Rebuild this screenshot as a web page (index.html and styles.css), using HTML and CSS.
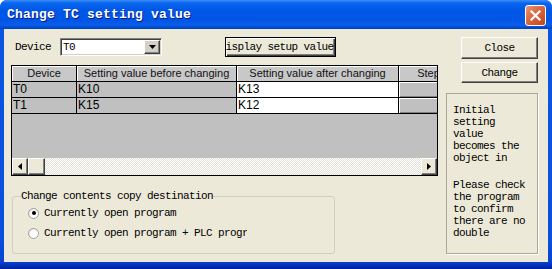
FILE: index.html
```html
<!DOCTYPE html>
<html lang="en">
<head>
  <meta charset="UTF-8" />
  <meta name="viewport" content="width=device-width, initial-scale=1.0"/>
  <title>Change TC setting value</title>
  <link rel="stylesheet" href="styles.css">
</head>
<body>
  <div class="window">
    <div class="titlebar">
      <span class="title">Change TC setting value</span>
      <span class="close-x">
        <svg width="13" height="13" viewBox="0 0 13 13"><path d="M2.5 2.5L10.5 10.5M10.5 2.5L2.5 10.5" stroke="#fff" stroke-width="2.2" stroke-linecap="square"/></svg>
      </span>
    </div>

    <div class="frame">
      <div class="left">
        <div class="toprow">
          <span class="label">Device</span>
          <div class="combo">
            <span class="combo-text">T0</span>
            <span class="combo-btn">
              <svg width="7" height="4" viewBox="0 0 7 4"><path d="M0 0H7L3.5 4Z" fill="#000"/></svg>
            </span>
          </div>
          <button class="btn btn-default"><span class="btn-label">Display setup value</span></button>
        </div>

        <div class="grid">
          <div class="grid-body">
            <div class="row head">
              <div class="cell">Device</div>
              <div class="cell">Setting value before changing</div>
              <div class="cell">Setting value after changing</div>
              <div class="cell">Step</div>
            </div>
            <div class="row">
              <div class="cell data">T0</div>
              <div class="cell data">K10</div>
              <div class="cell data edit">K13</div>
              <div class="cell data raised"></div>
            </div>
            <div class="row">
              <div class="cell data">T1</div>
              <div class="cell data">K15</div>
              <div class="cell data edit">K12</div>
              <div class="cell data raised"></div>
            </div>
          </div>
          <div class="hscroll">
            <span class="sb-btn">
              <svg width="4" height="7" viewBox="0 0 4 7"><path d="M4 0V7L0 3.5Z" fill="#000"/></svg>
            </span>
            <span class="sb-thumb"></span>
            <span class="sb-track"></span>
            <span class="sb-btn">
              <svg width="4" height="7" viewBox="0 0 4 7"><path d="M0 0V7L4 3.5Z" fill="#000"/></svg>
            </span>
          </div>
        </div>

        <fieldset class="group">
          <legend>Change contents copy destination</legend>
          <div class="radio-row">
            <span class="radio checked"></span>
            <span>Currently open program</span>
          </div>
          <div class="radio-row">
            <span class="radio"></span>
            <span class="clip">Currently open program + PLC program</span>
          </div>
        </fieldset>
      </div>

      <div class="right">
        <button class="btn side-btn">Close</button>
        <button class="btn side-btn">Change</button>
        <div class="info">
          <div class="info-top">Initial setting value becomes the object in memory. T</div>
          <div class="info-bottom">Please check the program to confirm there are no double</div>
        </div>
      </div>
    </div>
  </div>
</body>
</html>
```

FILE: styles.css
```css
body {
  margin: 0;
  width: 552px;
  height: 269px;
  overflow: hidden;
  background: #fff;
  font-family: "Liberation Mono", "DejaVu Sans Mono", monospace;
  font-size: 11px;
  letter-spacing: -0.6px;
  color: #000;
}

.window {
  width: 552px;
  height: 269px;
  display: flex;
  flex-direction: column;
  background: linear-gradient(to bottom, #0a57e4 0, #0a4fdc 240px, #0842d0 262px, #001ea0 269px);
  border-radius: 7px 7px 0 0;
  overflow: hidden;
}

/* title bar */
.titlebar {
  height: 29px;
  flex: none;
  display: flex;
  align-items: center;
  justify-content: space-between;
  padding: 0 6px 0 7px;
  background: linear-gradient(to bottom, #3d8ff7 0, #0a66f0 3px, #0058e6 10px, #0055e5 20px, #0a5ee8 25px, #0046cf 28px, #0041c8 29px);
}

.title {
  color: #fff;
  font-weight: bold;
  font-size: 13px;
  letter-spacing: 0.2px;
  text-shadow: 1px 1px 0 #0a1883;
  margin-top: -1px;
}

.close-x {
  width: 19px;
  height: 19px;
  display: flex;
  align-items: center;
  justify-content: center;
  border: 1px solid #fff;
  border-radius: 3px;
  background: linear-gradient(135deg, #e9977a 0, #dc6a44 40%, #c4441c 100%);
  margin-top: 1px;
}

/* dialog face */
.frame {
  flex: 1;
  margin: 0 4px 7px 4px;
  background: #ece9d8;
  display: flex;
  padding-top: 8px;
}

.left {
  width: 427px;
  margin-left: 7px;
}

.toprow {
  height: 20px;
  display: flex;
  align-items: center;
}

.label {
  margin-left: 4px;
}

.combo {
  margin-left: 9px;
  width: 102px;
  height: 18px;
  box-sizing: border-box;
  background: #fff;
  border: 1px solid;
  border-color: #808080 #fff #fff #808080;
  box-shadow: inset 1px 1px 0 #404040, inset -1px -1px 0 #d4d0c8;
  display: flex;
  align-items: center;
  padding: 1px;
}

.combo-text {
  flex: 1;
  padding-left: 1px;
}

.combo-btn {
  width: 16px;
  height: 14px;
  box-sizing: border-box;
  background: #d4d0c8;
  border: 1px solid;
  border-color: #fff #404040 #404040 #fff;
  box-shadow: inset -1px -1px 0 #808080;
  display: flex;
  align-items: center;
  justify-content: center;
}

.btn {
  font: inherit;
  letter-spacing: inherit;
  color: #000;
  background: #ece9d8;
  box-sizing: border-box;
  padding: 0;
  border: 1px solid;
  border-color: #fff #404040 #404040 #fff;
  box-shadow: inset -1px -1px 0 #808080;
  white-space: nowrap;
  overflow: hidden;
}

.btn-default {
  margin-left: 63px;
  width: 111px;
  height: 20px;
  border: 1px solid #000;
  box-shadow: inset 1px 1px 0 #fff, inset -1px -1px 0 #404040, inset -2px -2px 0 #808080;
  display: flex;
  align-items: center;
  justify-content: center;
}

.btn-label {
  margin-left: -8px;
}

/* grid */
.grid {
  margin-top: 8px;
  height: 111px;
  box-sizing: border-box;
  border: 1px solid #000;
  background: #c0c0c0;
  display: flex;
  flex-direction: column;
  font-family: "Liberation Sans", Arial, sans-serif;
  font-size: 11px;
  letter-spacing: 0;
  overflow: hidden;
}

.grid-body {
  flex: 1;
  overflow: hidden;
}

.row {
  display: grid;
  grid-template-columns: 65px 160px 162px 60px;
  height: 16px;
}

.cell {
  box-sizing: border-box;
  border-right: 1px solid #000;
  border-bottom: 1px solid #000;
  white-space: nowrap;
  overflow: hidden;
  line-height: 15px;
}

.head .cell {
  text-align: center;
  background: #c8c8c8;
  box-shadow: inset 1px 1px 0 #fff;
  color: #111;
}

.data {
  padding-left: 1px;
  font-size: 12px;
}

.edit {
  background: #fff;
}

.raised {
  box-shadow: inset 1px 1px 0 #fff, inset -1px -1px 0 #808080;
}

.hscroll {
  height: 17px;
  flex: none;
  display: flex;
}

.sb-btn,
.sb-thumb {
  width: 16px;
  box-sizing: border-box;
  background: #ece9d8;
  border: 1px solid;
  border-color: #fff #404040 #404040 #fff;
  box-shadow: inset -1px -1px 0 #808080;
  display: flex;
  align-items: center;
  justify-content: center;
}

.sb-thumb {
  width: 17px;
}

.sb-track {
  flex: 1;
  background: repeating-conic-gradient(#fff 0 25%, #e4e2d6 0 50%) 0 0 / 2px 2px;
}

/* copy destination group */
.group {
  margin: 14px 0 0 1px;
  width: 323px;
  height: 64px;
  box-sizing: border-box;
  border: 1px solid #d0d0bf;
  border-radius: 3px;
  padding: 0 0 0 8px;
}

.group legend {
  padding: 0;
  line-height: 12px;
}

.radio-row {
  display: flex;
  align-items: center;
  height: 20px;
  margin-left: 7px;
}

.radio-row:first-of-type {
  margin-top: 1px;
}

.radio {
  width: 11px;
  height: 11px;
  border-radius: 50%;
  box-sizing: border-box;
  border: 1px solid #a0a0a0;
  background: radial-gradient(circle at 65% 65%, #fff 0, #fff 40%, #dcdcd4 100%);
  margin-right: 5px;
  display: flex;
  align-items: center;
  justify-content: center;
}

.radio.checked::after {
  content: "";
  width: 4px;
  height: 4px;
  background: #000;
  border-radius: 50%;
}

.clip {
  width: 203px;
  overflow: hidden;
  white-space: nowrap;
}

/* right column */
.right {
  width: 92px;
  margin-left: 8px;
  display: flex;
  flex-direction: column;
}

.side-btn {
  margin-left: 15px;
  width: 77px;
  height: 22px;
}

.side-btn + .side-btn {
  margin-top: 3px;
  height: 21px;
}

.info {
  margin-top: 10px;
  height: 161px;
  box-sizing: border-box;
  border: 1px solid #aca899;
  box-shadow: 1px 1px 0 #fff;
  padding: 10px 10px 0 6px;
  line-height: 12px;
}

.info-top {
  height: 62px;
  overflow: hidden;
}

.info-bottom {
  margin-top: 13px;
}
```
